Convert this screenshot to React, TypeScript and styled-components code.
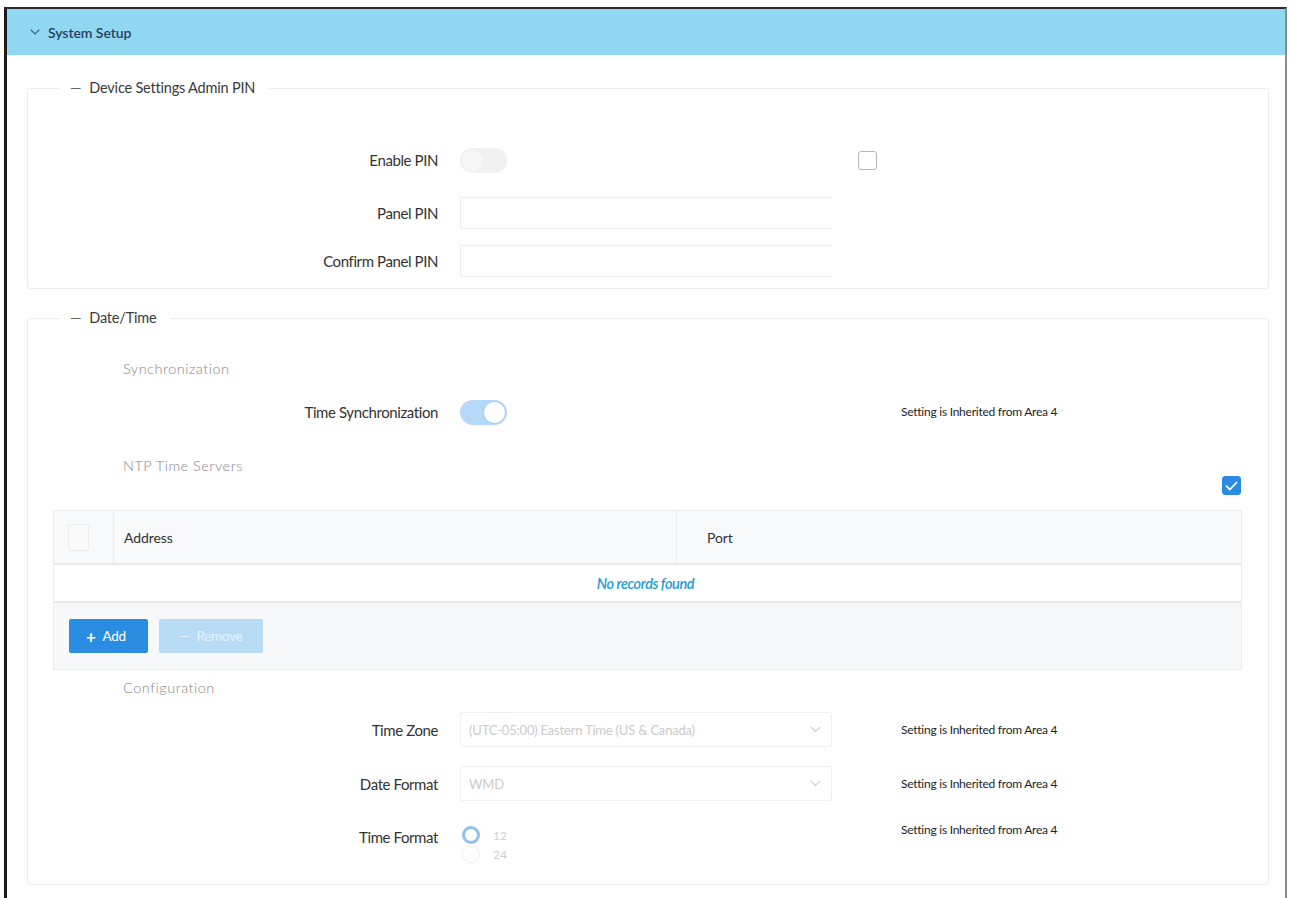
import React from 'react';
import styled, { createGlobalStyle } from 'styled-components';

const GlobalStyle = createGlobalStyle`
  html, body {
    margin: 0;
    padding: 0;
    background: #ffffff;
    font-family: Lato, "Open Sans", Arial, sans-serif;
    color: #333;
  }
  * {
    box-sizing: border-box;
  }
`;

const Frame = styled.div`
  margin: 7px 0 0 4px;
  width: 1283px;
  min-height: 900px;
  border-top: 2px solid #2a2a2a;
  border-left: 3px solid #1c1c1c;
  border-right: 2px solid #8a8a8a;
  background: #fff;
`;

const Header = styled.div`
  height: 46px;
  background: #90d7f1;
  display: flex;
  align-items: center;
  gap: 8px;
  padding-left: 23px;
  font-size: 14px;
  font-weight: 600;
  color: #27435c;
  letter-spacing: -0.05px;
`;

const Body = styled.div`
  padding: 24px 16px 20px 20px;
  display: flex;
  flex-direction: column;
  gap: 20px;
`;

const Fieldset = styled.fieldset<{ $pad: string }>`
  margin: 0;
  padding: ${p => p.$pad};
  border: 1px solid #ececec;
  border-radius: 3px;
  min-width: 0;
`;

const Legend = styled.legend`
  margin-left: 32px;
  padding: 0 14px 0 10px;
  font-size: 14.5px;
  line-height: 18px;
  color: #3a3a3a;
  letter-spacing: -0.2px;

  span {
    color: #666;
    margin-right: 8px;
  }
`;

const Row = styled.div<{ $h?: number; $mt?: number; $top?: boolean }>`
  display: grid;
  grid-template-columns: 410px 372px 1fr;
  column-gap: 22px;
  align-items: ${p => (p.$top ? 'start' : 'center')};
  min-height: ${p => p.$h ?? 32}px;
  margin-top: ${p => p.$mt ?? 0}px;
`;

const Label = styled.div<{ $pt?: number }>`
  text-align: right;
  font-size: 15px;
  line-height: 18px;
  color: #333;
  letter-spacing: -0.4px;
  padding-top: ${p => p.$pt ?? 0}px;
`;

const Extra = styled.div<{ $offset: number; $pt?: number }>`
  padding-left: ${p => p.$offset}px;
  padding-top: ${p => p.$pt ?? 0}px;
  display: flex;
  align-items: center;
`;

const Inherited = styled.span`
  font-size: 12px;
  line-height: 14px;
  color: #1e1e1e;
  letter-spacing: -0.25px;
`;

const Toggle = styled.div<{ $on?: boolean }>`
  width: 47px;
  height: 25px;
  border-radius: 13px;
  background: ${p => (p.$on ? '#b6d9f7' : '#f1f1f1')};
  position: relative;

  &::after {
    content: '';
    position: absolute;
    top: 2px;
    left: ${p => (p.$on ? '24px' : '2px')};
    width: 21px;
    height: 21px;
    border-radius: 50%;
    background: ${p => (p.$on ? '#fff' : '#f7f7f7')};
    box-shadow: ${p => (p.$on ? '0 0 2px rgba(80, 130, 180, 0.35)' : 'none')};
  }
`;

const Checkbox = styled.div<{ $checked?: boolean }>`
  width: 19px;
  height: 19px;
  border-radius: 3px;
  border: 1px solid ${p => (p.$checked ? '#2b8be0' : '#b5b5b5')};
  background: ${p => (p.$checked ? '#2b8be0' : '#fff')};
  display: flex;
  align-items: center;
  justify-content: center;
`;

const TextInput = styled.div`
  height: 32px;
  border: 1px solid #ededed;
  border-right: none;
  border-radius: 2px;
`;

const Select = styled.div`
  height: 35px;
  border: 1px solid #efefef;
  border-radius: 2px;
  display: flex;
  align-items: center;
  justify-content: space-between;
  padding: 0 10px 0 8px;
  font-size: 13px;
  color: #cbcbcb;
  letter-spacing: -0.2px;
`;

const SubHeading = styled.div<{ $mt: number }>`
  margin: ${p => p.$mt}px 0 0 95px;
  font-size: 14.5px;
  font-weight: 300;
  color: #888;
  letter-spacing: 0.5px;
  line-height: 18px;
`;

const CheckLine = styled.div`
  display: flex;
  justify-content: flex-end;
  margin: 1px 27px 0 0;
`;

const Table = styled.div`
  margin: 15px 26px 0 25px;
  border: 1px solid #ececec;
`;

const HeadRow = styled.div`
  display: grid;
  grid-template-columns: 60px 563px 1fr;
  height: 54px;
  background: #f7f9fb;
  border-bottom: 2px solid #e9e9e9;
  font-size: 14px;
  color: #333;
  letter-spacing: -0.1px;
`;

const HeadCell = styled.div<{ $center?: boolean }>`
  display: flex;
  align-items: center;
  justify-content: ${p => (p.$center ? 'center' : 'flex-start')};
  padding-left: ${p => (p.$center ? 0 : 10)}px;
  border-right: 1px solid #ececec;

  &:last-child {
    border-right: none;
    padding-left: 30px;
  }
`;

const CellBox = styled.div`
  width: 21px;
  height: 27px;
  border: 1px solid #ececec;
  border-radius: 2px;
  background: #fafafa;
  margin-left: -10px;
`;

const EmptyRow = styled.div`
  height: 38px;
  display: flex;
  align-items: center;
  justify-content: center;
  font-size: 14.5px;
  font-style: italic;
  font-weight: 600;
  color: #1d9bd8;
  letter-spacing: -0.4px;
  border-bottom: 2px solid #e9e9e9;
  padding-right: 4px;
`;

const ToolBar = styled.div`
  height: 66px;
  background: #f6f8fa;
  display: flex;
  align-items: center;
  gap: 11px;
  padding-left: 15px;
`;

const Button = styled.div<{ $disabled?: boolean }>`
  height: 34px;
  padding: 0 ${p => (p.$disabled ? 20 : 17)}px;
  border-radius: 2px;
  background: ${p => (p.$disabled ? '#b9dcf6' : '#2a8de2')};
  color: ${p => (p.$disabled ? '#e6f3fd' : '#fff')};
  display: flex;
  align-items: center;
  gap: 7px;
  font-size: 13.5px;
  letter-spacing: -0.3px;
  min-width: ${p => (p.$disabled ? 104 : 79)}px;
`;

const Plus = styled.span`
  font-size: 17px;
  font-weight: 700;
  line-height: 1;
`;

const RadioGroup = styled.div`
  display: flex;
  flex-direction: column;
  gap: 1px;
  padding-top: 3px;
`;

const RadioItem = styled.div`
  display: flex;
  align-items: center;
  gap: 13px;
  font-size: 12px;
  color: #cfcfcf;
`;

const Radio = styled.div<{ $checked?: boolean }>`
  width: 18px;
  height: 18px;
  border-radius: 50%;
  border: ${p => (p.$checked ? '3px solid #8fc1ee' : '1px solid #efefef')};
  background: #fff;
  margin-left: 2px;
`;

const Chevron = ({ color, size }: { color: string; size: number }) => (
  <svg width={size} height={size * 0.6} viewBox="0 0 10 6" fill="none">
    <path d="M1 1l4 4 4-4" stroke={color} strokeWidth="1.2" strokeLinecap="round" strokeLinejoin="round" />
  </svg>
);

const Check = () => (
  <svg width="13" height="10" viewBox="0 0 13 10" fill="none">
    <path d="M1.5 5.2l3.4 3.3L11.5 1.5" stroke="#fff" strokeWidth="1.8" strokeLinecap="round" strokeLinejoin="round" />
  </svg>
);

const inherited = 'Setting is Inherited from Area 4';

export default function App() {
  return (
    <>
      <GlobalStyle />
      <Frame>
        <Header>
          <Chevron color="#3d6a8f" size={10} />
          System Setup
        </Header>
        <Body>
          <Fieldset $pad="45px 0 11px 0">
            <Legend>
              <span>—</span>Device Settings Admin PIN
            </Legend>
            <Row $h={36}>
              <Label>Enable PIN</Label>
              <div>
                <Toggle />
              </div>
              <Extra $offset={4}>
                <Checkbox />
              </Extra>
            </Row>
            <Row $mt={19}>
              <Label>Panel PIN</Label>
              <TextInput />
              <div />
            </Row>
            <Row $mt={16}>
              <Label>Confirm Panel PIN</Label>
              <TextInput />
              <div />
            </Row>
          </Fieldset>

          <Fieldset $pad="0 0 21px 0">
            <Legend>
              <span>—</span>Date/Time
            </Legend>
            <SubHeading $mt={33}>Synchronization</SubHeading>
            <Row $mt={18} $h={32}>
              <Label>Time Synchronization</Label>
              <div>
                <Toggle $on />
              </div>
              <Extra $offset={47}>
                <Inherited>{inherited}</Inherited>
              </Extra>
            </Row>
            <SubHeading $mt={29}>NTP Time Servers</SubHeading>
            <CheckLine>
              <Checkbox $checked>
                <Check />
              </Checkbox>
            </CheckLine>
            <Table>
              <HeadRow>
                <HeadCell $center>
                  <CellBox />
                </HeadCell>
                <HeadCell>Address</HeadCell>
                <HeadCell>Port</HeadCell>
              </HeadRow>
              <EmptyRow>No records found</EmptyRow>
              <ToolBar>
                <Button>
                  <Plus>+</Plus> Add
                </Button>
                <Button $disabled>
                  <span>—</span> Remove
                </Button>
              </ToolBar>
            </Table>
            <SubHeading $mt={9}>Configuration</SubHeading>
            <Row $mt={15} $h={35}>
              <Label>Time Zone</Label>
              <Select>
                (UTC-05:00) Eastern Time (US &amp; Canada)
                <Chevron color="#d0d0d0" size={11} />
              </Select>
              <Extra $offset={47}>
                <Inherited>{inherited}</Inherited>
              </Extra>
            </Row>
            <Row $mt={19} $h={35}>
              <Label>Date Format</Label>
              <Select>
                WMD
                <Chevron color="#d0d0d0" size={11} />
              </Select>
              <Extra $offset={47}>
                <Inherited>{inherited}</Inherited>
              </Extra>
            </Row>
            <Row $mt={22} $h={40} $top>
              <Label $pt={5}>Time Format</Label>
              <RadioGroup>
                <RadioItem>
                  <Radio $checked />
                  12
                </RadioItem>
                <RadioItem>
                  <Radio />
                  24
                </RadioItem>
              </RadioGroup>
              <Extra $offset={47} $pt={0}>
                <Inherited>{inherited}</Inherited>
              </Extra>
            </Row>
          </Fieldset>
        </Body>
      </Frame>
    </>
  );
}
